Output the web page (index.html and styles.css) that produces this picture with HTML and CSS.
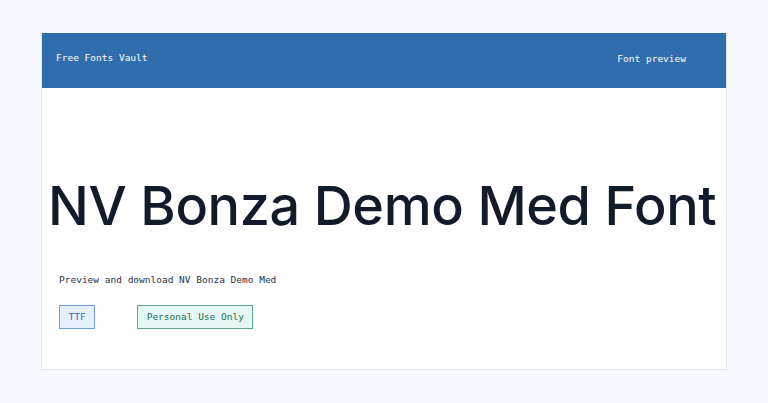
FILE: index.html
```html
<!DOCTYPE html>
<html lang="en">
<head>
    <meta charset="UTF-8">
    <meta name="viewport" content="width=device-width, initial-scale=1.0">
    <title>NV Bonza Demo Med Font</title>
    <link rel="stylesheet" href="styles.css">
</head>
<body>
    <div class="card">
        <header class="top-bar">
            <span class="site-name">Free Fonts Vault</span>
            <span class="top-link">Font preview</span>
        </header>
        <main class="preview">
            <h1 class="font-title">NV Bonza Demo Med Font</h1>
            <p class="subtitle">Preview and download NV Bonza Demo Med</p>
            <div class="tags">
                <span class="tag tag-format">TTF</span>
                <span class="tag tag-license">Personal Use Only</span>
            </div>
        </main>
    </div>
</body>
</html>
```

FILE: styles.css
```css
body {
    margin: 0;
    padding: 33px 40px 0 41px;
    background-color: #f6f9fd;
    font-family: "DejaVu Sans Mono", monospace;
}

.card {
    width: 686px;
    height: 337px;
    background-color: #fff;
    border: 1px solid #e3e8f0;
    border-top: none;
    box-sizing: border-box;
}

.top-bar {
    display: flex;
    justify-content: space-between;
    height: 55px;
    background-color: #2f6dad;
    color: #fff;
    font-size: 9.5px;
    padding: 0 40px 0 14px;
}

.site-name {
    margin-top: 19px;
}

.top-link {
    margin-top: 20px;
}

.preview {
    padding: 0 17px;
}

.font-title {
    margin: 88px 0 0 -11px;
    font-family: Inter, sans-serif;
    font-weight: 500;
    font-size: 54px;
    letter-spacing: -0.4px;
    line-height: 60px;
    color: #131b2b;
    white-space: nowrap;
}

.subtitle {
    margin: 38px 0 0;
    font-size: 9.5px;
    color: #2b3447;
}

.tags {
    display: flex;
    gap: 42px;
    margin-top: 20px;
}

.tag {
    font-size: 9.5px;
    padding: 5px 8.5px 6px;
    line-height: 11px;
    border: 1px solid;
}

.tag-format {
    background-color: #e6f0fc;
    border-color: #6f9fd6;
    color: #2f6dad;
}

.tag-license {
    background-color: #e6f8f3;
    border-color: #5da895;
    color: #1e6e5a;
}
```
